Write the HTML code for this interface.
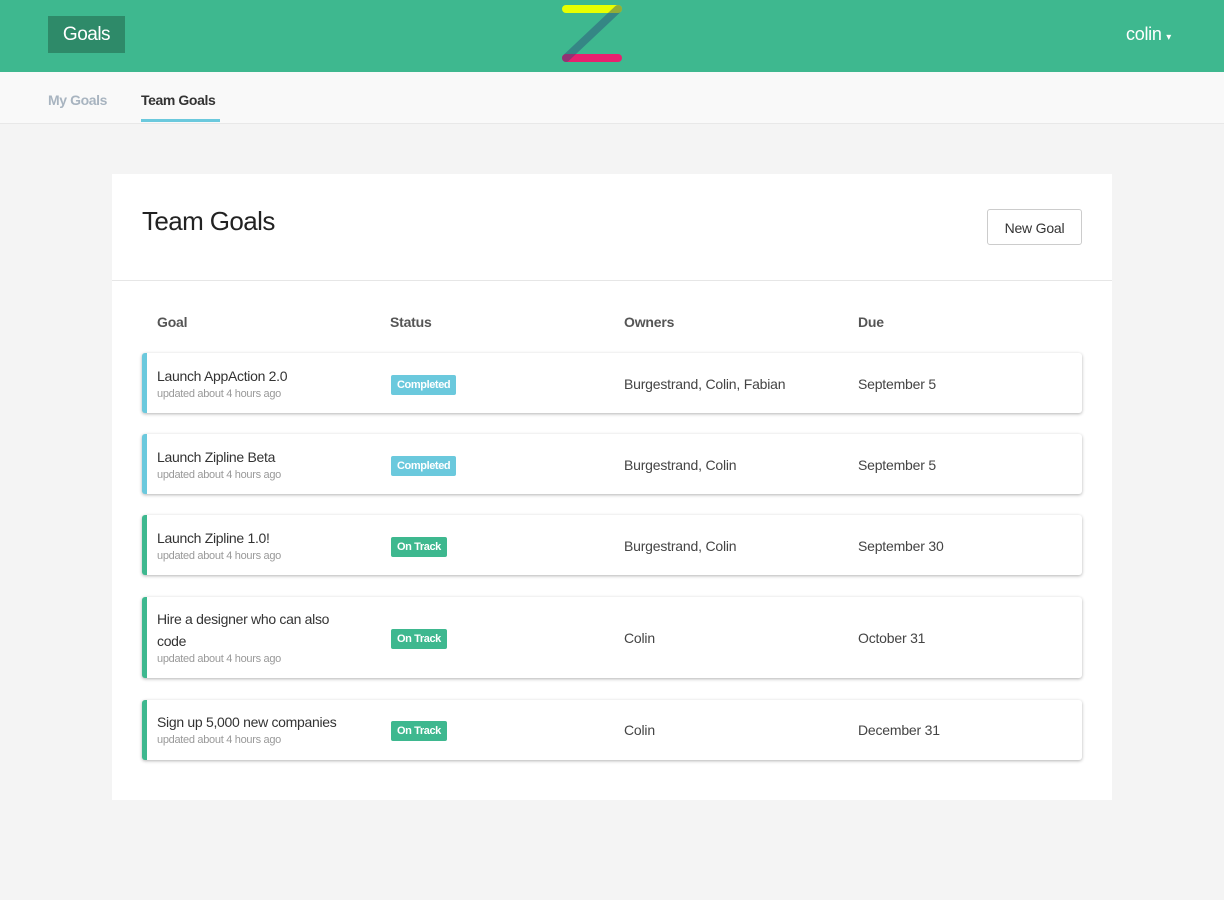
<!DOCTYPE html>
<html><head><style>
*{box-sizing:border-box;margin:0;padding:0}
body{width:1224px;height:900px;background:#f4f4f4;font-family:"Liberation Sans",sans-serif;color:#333;position:relative;overflow:hidden}
.top{position:absolute;left:0;top:0;width:1224px;height:72px;background:#3eb88f}
.brand{position:absolute;left:48px;top:16px;width:77px;height:37px;background:#2e8a69;color:#fff;font-size:19px;line-height:37px;text-align:center;letter-spacing:-0.5px}
.user{position:absolute;right:53px;top:24px;color:#fff;font-size:18px;letter-spacing:-0.3px}
.nav{position:absolute;top:72px;left:0;width:1224px;height:52px;background:#f9f9f9;border-bottom:1px solid #e8e8e8}
.nav a{position:absolute;top:20px;font-size:14px;font-weight:bold;letter-spacing:-0.4px}
.card{position:absolute;left:112px;top:174px;width:1000px;height:626px;background:#fff}
h1{position:absolute;left:30px;top:32px;font-size:26px;font-weight:normal;color:#222;letter-spacing:-0.6px}
.btn{position:absolute;left:875px;top:35px;width:95px;height:36px;border:1px solid #ccc;border-radius:3px;font-size:14px;line-height:36px;text-align:center;letter-spacing:-0.2px}
.hr{position:absolute;left:0;top:106px;width:1000px;height:1px;background:#e6e6e6}
.th{position:absolute;top:140px;font-size:14px;font-weight:bold;color:#555;letter-spacing:-0.2px}
.row{position:absolute;left:30px;width:940px;background:#fff;border-radius:3px;box-shadow:0 1px 3px rgba(0,0,0,.3);border-left:5px solid #6bc9dd}
.row.g{border-left-color:#3eb88f}
.row .t{position:absolute;left:10px;font-size:14px;color:#333;line-height:22px;width:210px;letter-spacing:-0.3px}
.row .s{position:absolute;left:10px;font-size:11px;color:#999;letter-spacing:-0.3px}
.row .c{position:absolute;font-size:14px;color:#444;letter-spacing:-0.2px}
.badge{position:absolute;left:244px;height:20px;line-height:20px;padding:0 6px;border-radius:2px;color:#fff;font-size:11px;font-weight:bold;background:#6bc9dd;letter-spacing:-0.4px}
.g .badge{background:#3eb88f}
</style></head><body>
<div class="top">
<div class="brand">Goals</div>
<svg style="position:absolute;left:560px;top:3px" width="64" height="62">
<line x1="6" y1="6" x2="58" y2="6" stroke="#e8ff00" stroke-width="8" stroke-linecap="round"/>
<line x1="6" y1="55" x2="58" y2="55" stroke="#e8206f" stroke-width="8" stroke-linecap="round"/>
<line x1="58" y1="6" x2="6" y2="55" stroke="#2a4a7a" stroke-opacity=".45" stroke-width="8" stroke-linecap="round"/>
</svg>
<div class="user">colin <span style="font-size:10px">▾</span></div>
</div>
<div class="nav">
<a style="left:48px;color:#a8b4c0">My Goals</a>
<a style="left:141px;color:#333">Team Goals</a>
<div style="position:absolute;left:141px;top:47px;width:79px;height:3px;background:#6bc9dd"></div>
</div>
<div class="card">
<h1>Team Goals</h1>
<div class="btn">New Goal</div>
<div class="hr"></div>
<div class="th" style="left:45px">Goal</div>
<div class="th" style="left:278px">Status</div>
<div class="th" style="left:512px">Owners</div>
<div class="th" style="left:746px">Due</div>

<div class="row" style="top:179px;height:60px"><div class="t" style="top:12px">Launch AppAction 2.0</div><div class="s" style="top:35px">updated about 4 hours ago</div><div class="badge" style="top:22px">Completed</div><div class="c" style="left:477px;top:23px">Burgestrand, Colin, Fabian</div><div class="c" style="left:711px;top:23px">September 5</div></div>
<div class="row" style="top:260px;height:60px"><div class="t" style="top:12px">Launch Zipline Beta</div><div class="s" style="top:35px">updated about 4 hours ago</div><div class="badge" style="top:22px">Completed</div><div class="c" style="left:477px;top:23px">Burgestrand, Colin</div><div class="c" style="left:711px;top:23px">September 5</div></div>
<div class="row g" style="top:341px;height:60px"><div class="t" style="top:12px">Launch Zipline 1.0!</div><div class="s" style="top:35px">updated about 4 hours ago</div><div class="badge" style="top:22px">On Track</div><div class="c" style="left:477px;top:23px">Burgestrand, Colin</div><div class="c" style="left:711px;top:23px">September 30</div></div>
<div class="row g" style="top:423px;height:81px"><div class="t" style="top:11px;width:200px">Hire a designer who can also code</div><div class="s" style="top:56px">updated about 4 hours ago</div><div class="badge" style="top:32px">On Track</div><div class="c" style="left:477px;top:33px">Colin</div><div class="c" style="left:711px;top:33px">October 31</div></div>
<div class="row g" style="top:526px;height:60px"><div class="t" style="top:11px">Sign up 5,000 new companies</div><div class="s" style="top:34px">updated about 4 hours ago</div><div class="badge" style="top:21px">On Track</div><div class="c" style="left:477px;top:22px">Colin</div><div class="c" style="left:711px;top:22px">December 31</div></div>
</div>
</body></html>
